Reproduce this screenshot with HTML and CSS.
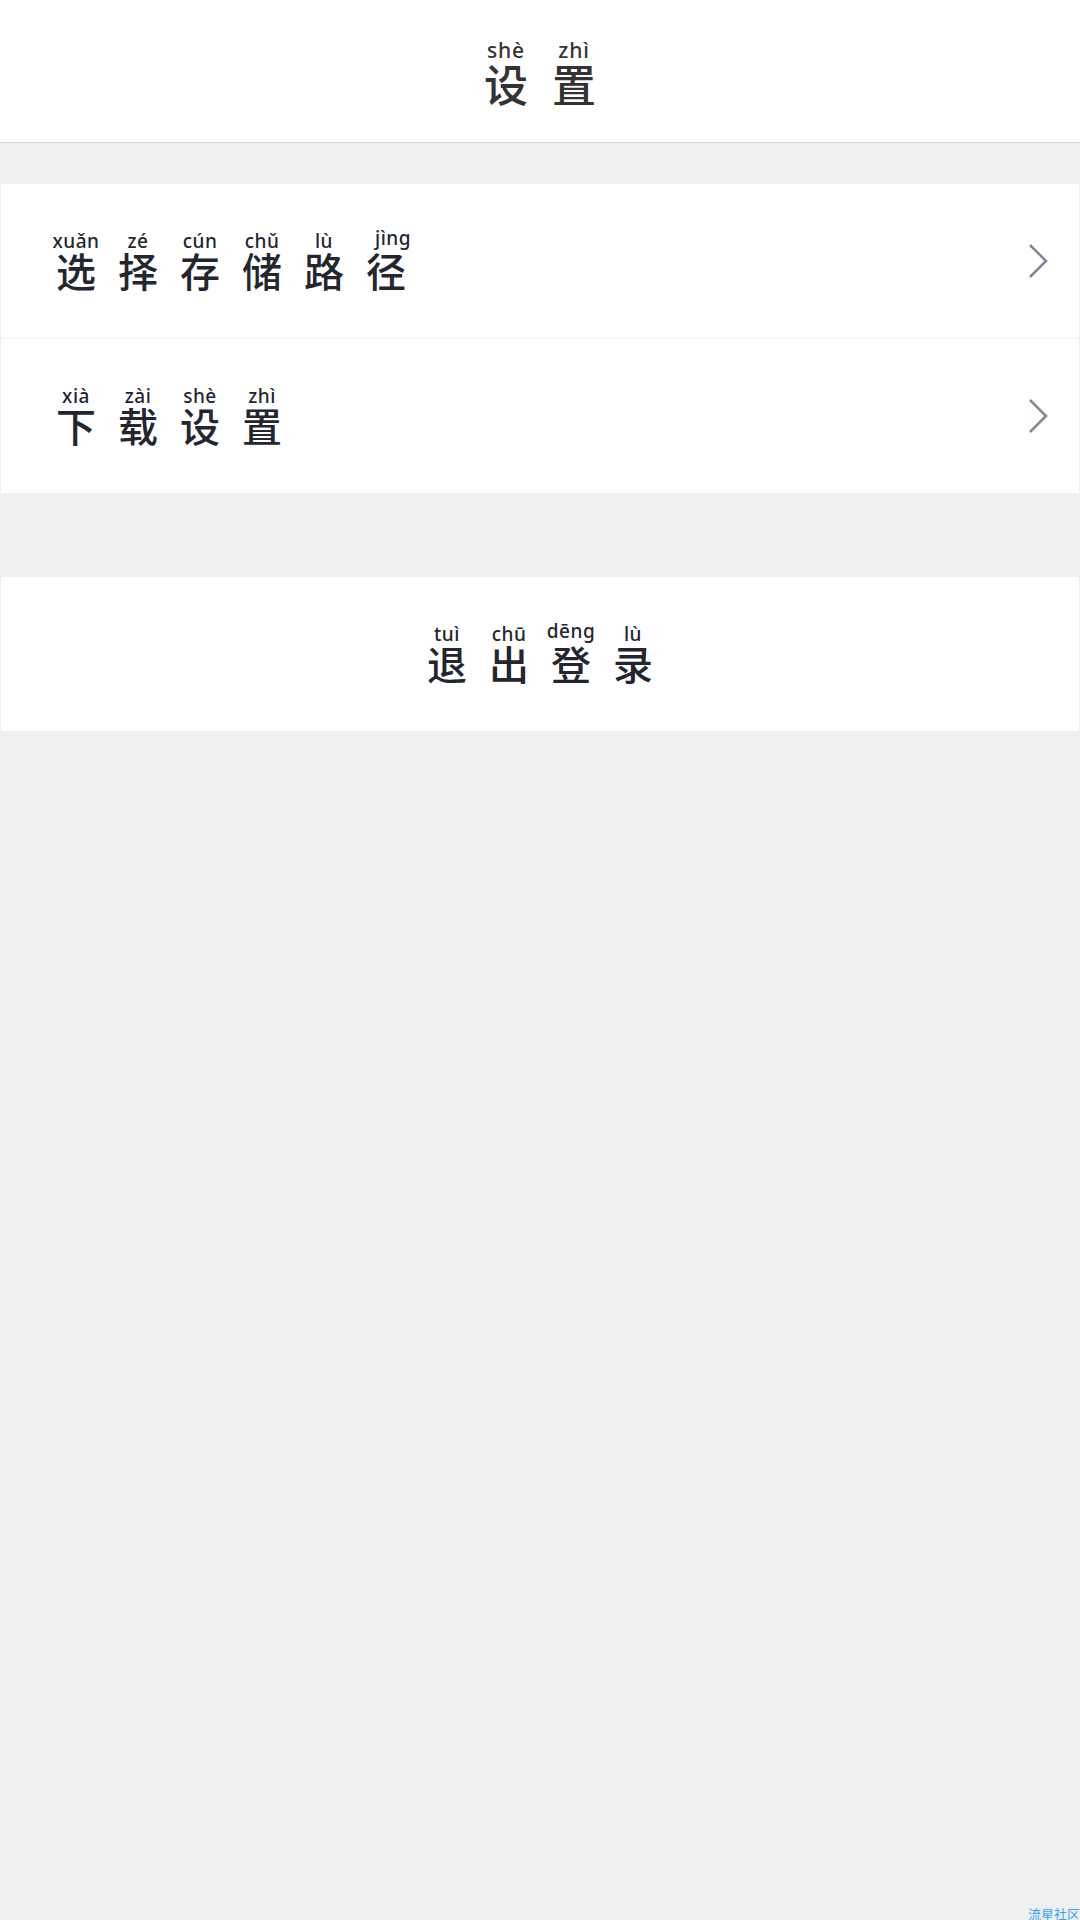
FILE: index.html
```html
<!DOCTYPE html>
<html lang="zh-CN">
<head>
  <meta charset="UTF-8">
  <title>设置</title>
  <link rel="stylesheet" href="styles.css">
</head>
<body>
  <header class="header">
    <h1 class="words words-title">
      <span class="cell"><span class="py">shè</span><span class="hz">设</span></span>
      <span class="cell"><span class="py">zhì</span><span class="hz">置</span></span>
    </h1>
  </header>

  <section class="group group-first">
    <div class="row">
      <div class="words">
        <span class="cell"><span class="py">xuǎn</span><span class="hz">选</span></span>
        <span class="cell"><span class="py">zé</span><span class="hz">择</span></span>
        <span class="cell"><span class="py">cún</span><span class="hz">存</span></span>
        <span class="cell"><span class="py">chǔ</span><span class="hz">储</span></span>
        <span class="cell"><span class="py">lù</span><span class="hz">路</span></span>
        <span class="cell"><span class="py py-raised py-right">jìng</span><span class="hz">径</span></span>
      </div>
      <svg class="arrow" viewBox="0 0 20 36"><path d="M2 2 L18 18 L2 34"/></svg>
    </div>
    <div class="row">
      <div class="words">
        <span class="cell"><span class="py">xià</span><span class="hz">下</span></span>
        <span class="cell"><span class="py">zài</span><span class="hz">载</span></span>
        <span class="cell"><span class="py">shè</span><span class="hz">设</span></span>
        <span class="cell"><span class="py">zhì</span><span class="hz">置</span></span>
      </div>
      <svg class="arrow" viewBox="0 0 20 36"><path d="M2 2 L18 18 L2 34"/></svg>
    </div>
  </section>

  <section class="group group-logout">
    <div class="row row-center">
      <div class="words">
        <span class="cell"><span class="py">tuì</span><span class="hz">退</span></span>
        <span class="cell"><span class="py">chū</span><span class="hz">出</span></span>
        <span class="cell"><span class="py py-raised">dēng</span><span class="hz">登</span></span>
        <span class="cell"><span class="py">lù</span><span class="hz">录</span></span>
      </div>
    </div>
  </section>

  <div class="mark">流星社区</div>
</body>
</html>
```

FILE: styles.css
```css
* {
  margin: 0;
  padding: 0;
  box-sizing: border-box;
}
html, body {
  height: 100%;
  background-color: #eff0f2;
  font-family: "Noto Sans CJK SC", "Noto Sans", sans-serif;
  overflow: hidden;
}
body {
  position: relative;
}
.header {
  height: 143px;
  background: #fff;
  border-bottom: 1px solid #d5d6dc;
  display: flex;
  justify-content: center;
  align-items: center;
  padding-top: 4px;
}
.group {
  background: #fff;
  border-left: 1px solid #eff0f2;
  border-right: 1px solid #eff0f2;
}
.group-first {
  margin-top: 41px;
}
.group-logout {
  margin-top: 84px;
}
.row {
  height: 155px;
  display: flex;
  align-items: center;
  justify-content: space-between;
  padding: 0 31px 0 44px;
  border-bottom: 1px solid #f1f2f4;
}
.row:last-child {
  height: 154px;
  border-bottom: none;
}
.row-center {
  justify-content: center;
  padding: 0;
}
.words {
  display: flex;
  color: #23262e;
}
.cell {
  display: flex;
  flex-direction: column;
  align-items: center;
  width: 62px;
}
.py {
  font-family: "Noto Sans", sans-serif;
  font-size: 19px;
  font-weight: 500;
  line-height: 22px;
  letter-spacing: 0.5px;
}
.py-raised {
  margin-top: -3px;
  margin-bottom: 3px;
}
.py-right {
  margin-left: 14px;
}
.hz {
  font-size: 40px;
  line-height: 46px;
  font-weight: 500;
  margin-top: -5px;
}
.words-title {
  color: #333;
  font-weight: 400;
}
.words-title .cell {
  width: 68px;
}
.words-title .py {
  font-size: 21px;
  letter-spacing: 0.8px;
}
.words-title .hz {
  font-size: 44px;
  line-height: 50px;
  margin-top: -3px;
}
.arrow {
  width: 20px;
  height: 36px;
  fill: none;
  stroke: #80869a;
  stroke-width: 2.5;
}
.mark {
  position: absolute;
  right: 0;
  bottom: 0;
  font-size: 13px;
  line-height: 13px;
  color: #3aa0ee;
}
```
